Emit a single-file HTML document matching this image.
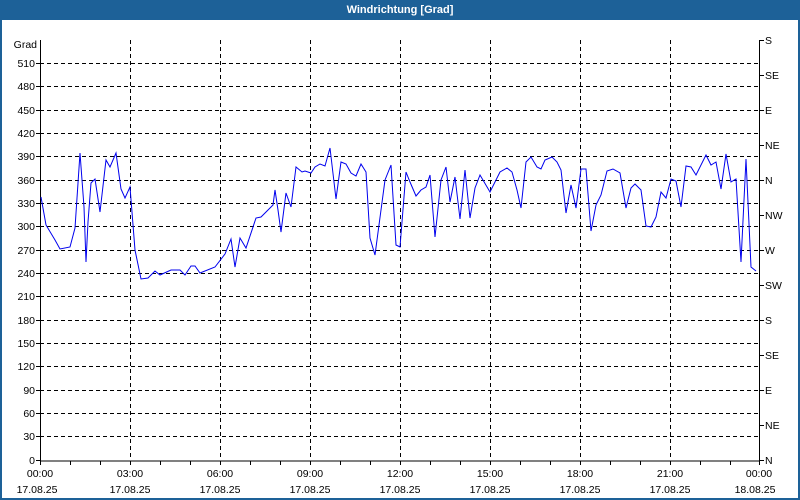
<!DOCTYPE html>
<html><head><meta charset="utf-8"><style>
html,body{margin:0;padding:0;background:#fff}
svg{display:block;font-family:"Liberation Sans",sans-serif;font-size:10.5px}
</style></head><body>
<svg width="800" height="500" viewBox="0 0 800 500" xmlns="http://www.w3.org/2000/svg">
<rect x="0" y="0" width="800" height="500" fill="#1d6198"/>
<rect x="2" y="20" width="796" height="478" fill="#fff"/>
<text x="400" y="13" fill="#fff" font-weight="bold" font-size="11" text-anchor="middle">Windrichtung [Grad]</text>
<g stroke="#000" stroke-dasharray="4,3" stroke-width="1" fill="none">
<path d="M130.5 40V460M220.5 40V460M310.5 40V460M400.5 40V460M490.5 40V460M580.5 40V460M670.5 40V460"/>
<path d="M40 63.5H760M40 86.5H760M40 110.5H760M40 133.5H760M40 156.5H760M40 180.5H760M40 203.5H760M40 226.5H760M40 250.5H760M40 273.5H760M40 296.5H760M40 320.5H760M40 343.5H760M40 366.5H760M40 390.5H760M40 413.5H760M40 436.5H760"/>
</g>
<g stroke="#000" stroke-width="1" fill="none">
<path d="M40.5 40V461H759.5V40"/>
<path d="M40.5 461v4M70.5 461v4M100.5 461v4M130.5 461v4M160.5 461v4M190.5 461v4M220.5 461v4M250.5 461v4M280.5 461v4M310.5 461v4M340.5 461v4M370.5 461v4M400.5 461v4M430.5 461v4M460.5 461v4M490.5 461v4M520.5 461v4M550.5 461v4M580.5 461v4M610.5 461v4M640.5 461v4M670.5 461v4M700.5 461v4M730.5 461v4M759.5 461v4"/>
<path d="M36 63.5h4M36 86.5h4M36 110.5h4M36 133.5h4M36 156.5h4M36 180.5h4M36 203.5h4M36 226.5h4M36 250.5h4M36 273.5h4M36 296.5h4M36 320.5h4M36 343.5h4M36 366.5h4M36 390.5h4M36 413.5h4M36 436.5h4M36 460.5h4"/>
<path d="M760 40.5h4M760 75.5h4M760 110.5h4M760 145.5h4M760 180.5h4M760 215.5h4M760 250.5h4M760 285.5h4M760 320.5h4M760 355.5h4M760 390.5h4M760 425.5h4M760 460.5h4"/>
</g>
<g fill="#000" text-anchor="end">
<text x="37" y="48">Grad</text>
<text x="35" y="67">510</text><text x="35" y="90">480</text><text x="35" y="114">450</text><text x="35" y="137">420</text><text x="35" y="160">390</text><text x="35" y="184">360</text><text x="35" y="207">330</text><text x="35" y="230">300</text><text x="35" y="254">270</text><text x="35" y="277">240</text><text x="35" y="300">210</text><text x="35" y="324">180</text><text x="35" y="347">150</text><text x="35" y="370">120</text><text x="35" y="394">90</text><text x="35" y="417">60</text><text x="35" y="440">30</text><text x="35" y="464">0</text>
</g>
<g fill="#000">
<text x="765" y="44">S</text><text x="765" y="79">SE</text><text x="765" y="114">E</text><text x="765" y="149">NE</text><text x="765" y="184">N</text><text x="765" y="219">NW</text><text x="765" y="254">W</text><text x="765" y="289">SW</text><text x="765" y="324">S</text><text x="765" y="359">SE</text><text x="765" y="394">E</text><text x="765" y="429">NE</text><text x="765" y="464">N</text>
</g>
<g fill="#000" text-anchor="middle">
<text x="40" y="477">00:00</text><text x="130" y="477">03:00</text><text x="220" y="477">06:00</text><text x="310" y="477">09:00</text><text x="400" y="477">12:00</text><text x="490" y="477">15:00</text><text x="580" y="477">18:00</text><text x="670" y="477">21:00</text><text x="759" y="477">00:00</text>
<text x="37" y="493">17.08.25</text><text x="130" y="493">17.08.25</text><text x="220" y="493">17.08.25</text><text x="310" y="493">17.08.25</text><text x="400" y="493">17.08.25</text><text x="490" y="493">17.08.25</text><text x="580" y="493">17.08.25</text><text x="670" y="493">17.08.25</text><text x="755" y="493">18.08.25</text>
</g>
<polyline fill="none" stroke="#0000ee" stroke-width="1" points="41,197 46,225 55,240 60,249 70,247 75,228 80,153 84,207 86,262 88,222 91,183 95,179 100,212 106,160 110,167 116,153 121,189 125,198 130,187 135,250 141,279 148,278 155,271 160,275 171,270 180,270 185,275 191,266 195,266 200,273 215,267 225,254 231,239 235,267 240,238 246,248 256,218 261,217 273,205 275,190 278,210 281,232 286,193 291,207 296,167 302,172 305,171 311,173 315,167 320,164 325,166 330,148 336,199 341,162 346,164 351,173 356,176 361,164 366,172 370,238 375,255 385,180 391,165 396,245 400,247 406,172 410,182 416,196 421,190 426,187 430,175 435,237 441,180 446,167 450,202 455,177 460,219 465,170 470,218 475,188 480,175 490,192 500,172 507,168 512,172 517,190 521,208 526,162 531,157 537,167 541,169 545,160 552,157 557,162 561,170 566,213 571,185 576,208 581,169 586,169 591,231 596,205 601,195 607,171 613,169 620,173 626,208 631,188 635,184 641,190 646,226 651,227 656,217 661,192 666,198 671,179 676,181 681,207 686,166 691,167 696,175 706,155 711,165 716,162 721,189 726,154 731,182 736,179 741,262 746,159 751,267 756,271"/>
</svg>
</body></html>
